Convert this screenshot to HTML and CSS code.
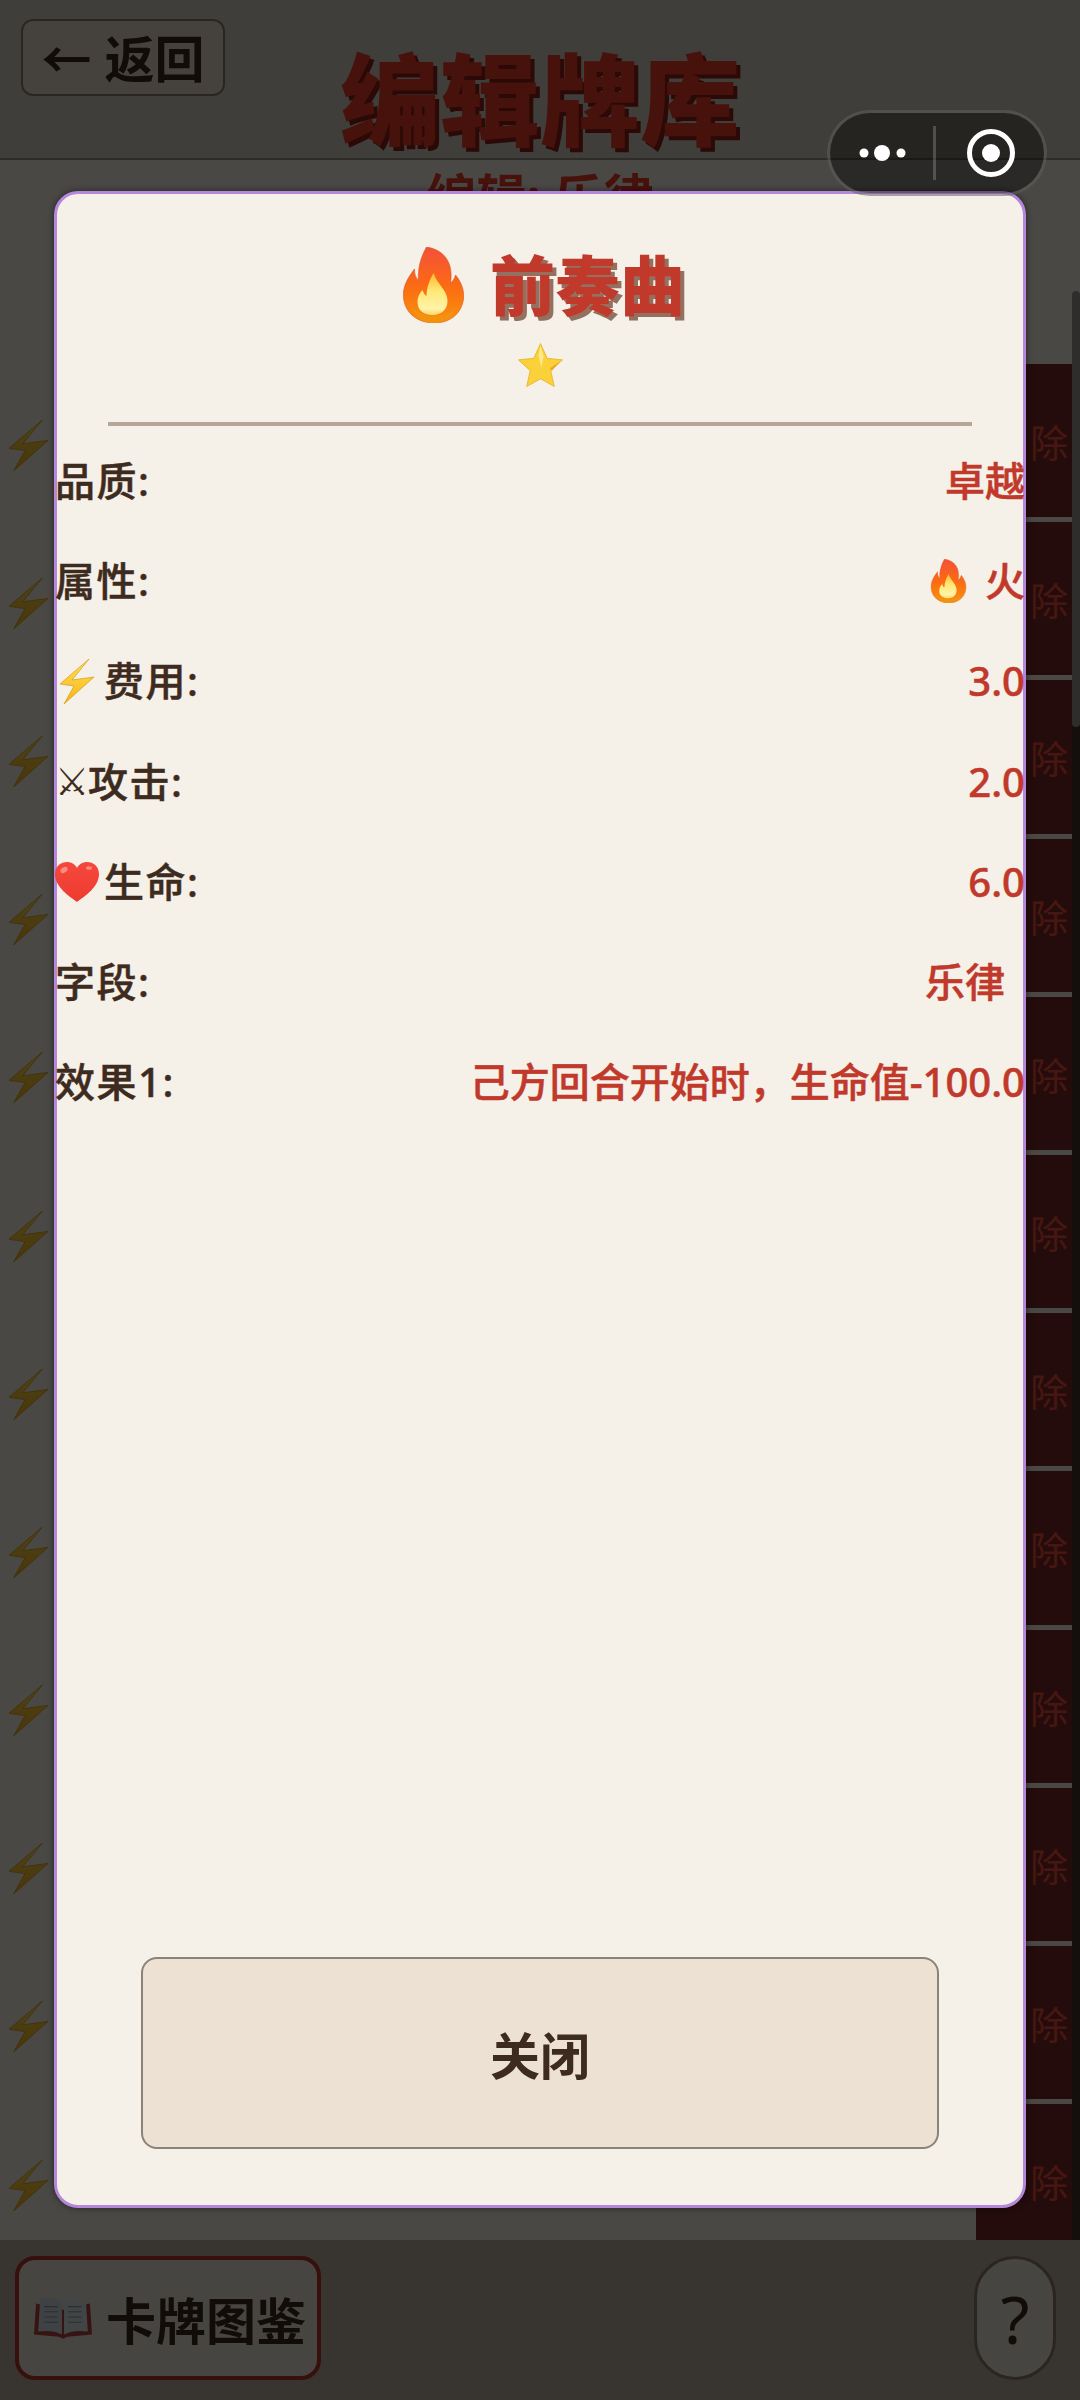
FILE: index.html
```html
<!DOCTYPE html>
<html lang="zh-CN">
<head>
  <meta charset="UTF-8">
  <title>编辑牌库</title>
  <link rel="stylesheet" href="styles.css">
</head>
<body>

<svg class="icon-defs" width="0" height="0">
  <defs>
    <linearGradient id="flameOuter" x1="0" y1="0" x2="0" y2="1">
      <stop offset="0" stop-color="#f4503a"/>
      <stop offset="0.5" stop-color="#fb6a14"/>
      <stop offset="1" stop-color="#f9920c"/>
    </linearGradient>
    <linearGradient id="flameInner" x1="0" y1="0" x2="0" y2="1">
      <stop offset="0" stop-color="#fdb92e"/>
      <stop offset="0.45" stop-color="#ffe97a"/>
      <stop offset="0.85" stop-color="#fff3a8"/>
      <stop offset="1" stop-color="#ffd76a"/>
    </linearGradient>
    <linearGradient id="boltFill" x1="0" y1="0" x2="0" y2="1">
      <stop offset="0" stop-color="#ffe35a"/>
      <stop offset="1" stop-color="#f8b414"/>
    </linearGradient>
    <linearGradient id="heartFill" x1="0" y1="0" x2="0" y2="1">
      <stop offset="0" stop-color="#f5483c"/>
      <stop offset="1" stop-color="#ee3b30"/>
    </linearGradient>
    <symbol id="i-flame" viewBox="0 0 60 76">
      <path d="M23 0C42 3 50 17 47 36C50 34 51 31 52 28C58 35 61 44 60 52C58 67 46 76 31 76C14 76 1 66 0 50C-1 39 5 30 11 22C11 27 12 31 15 33C14 20 18 9 23 0Z" fill="url(#flameOuter)" stroke="#d9541a" stroke-width="0.6"/>
      <path d="M30 26C34 38 44 43 44 54C44 63 37 68 29 68C20 68 14 63 14 55C14 50 16 46 19 43C20 46 21 48 23 49C23 41 26 33 30 26Z" fill="url(#flameInner)"/>
      <path d="M8 60C16 70 42 74 54 60C49 70 39 76 30 76C19 76 12 70 8 60Z" fill="#f2930f"/>
    </symbol>
    <symbol id="i-star" viewBox="0 0 44 43">
      <path d="M22 0.5L28.5 15L43.5 16.5L32 27L35.5 42.5L22 35L8.500 42.5L12 27L0.500 16.500L15.500 15Z" fill="#fbd13a" stroke="#e8b023" stroke-width="0.8" stroke-linejoin="round"/>
      <path d="M22 2L25 13L23 24L20 13Z" fill="#ffe98a"/>
      <path d="M31 25L41 18L33 27Z" fill="#eaa91f"/>
    </symbol>
    <symbol id="i-bolt" viewBox="0 0 34 45" preserveAspectRatio="none">
      <path d="M29 0L12 21L34 18L4 45L14 27L0 25Z" fill="url(#boltFill)" stroke="#d89a16" stroke-width="0.7" stroke-linejoin="round"/>
    </symbol>
    <symbol id="i-heart" viewBox="0 0 44 40">
      <path d="M22 40C14 34 0 25 0 12C0 4 6 0 12 0C16 0 20 2 22 6C24 2 28 0 32 0C38 0 44 4 44 12C44 25 30 34 22 40Z" fill="url(#heartFill)"/>
      <ellipse cx="9" cy="8" rx="4" ry="2.500" fill="#fb8a80" transform="rotate(-30 9 8)"/>
      <ellipse cx="34" cy="6" rx="3" ry="1.800" fill="#fb8a80"/>
    </symbol>
    <symbol id="i-book" viewBox="0 0 56 40">
      <path d="M0 36L2 6L28 12L54 6L56 36L32 38L28 40L24 38Z" fill="#b8403a"/>
      <path d="M4 33L6 2C14 0 23 1 27 6L27 36C20 32 12 32 4 33Z" fill="#cfdce4"/>
      <path d="M52 33L50 2C42 0 33 1 29 6L29 36C36 32 44 32 52 33Z" fill="#dbe6ec"/>
      <path d="M10 9H23M10 14H23M10 19H23M10 24H23M33 9H46M33 14H46M33 19H46M33 24H46" stroke="#8f9aa0" stroke-width="1"/>
    </symbol>
  </defs>
</svg>

<div class="page">
  <header class="top-bar">
    <button class="back-btn">← 返回</button>
    <h1 class="page-title">编辑牌库</h1>
  </header>

  <main class="deck-area">
    <h2 class="deck-name">编辑: 乐律</h2>
    <div class="deck-list">
      <div class="deck-row"><svg class="row-bolt"><use href="#i-bolt"/></svg><button class="remove-btn">除</button></div>
      <div class="deck-row"><svg class="row-bolt"><use href="#i-bolt"/></svg><button class="remove-btn">除</button></div>
      <div class="deck-row"><svg class="row-bolt"><use href="#i-bolt"/></svg><button class="remove-btn">除</button></div>
      <div class="deck-row"><svg class="row-bolt"><use href="#i-bolt"/></svg><button class="remove-btn">除</button></div>
      <div class="deck-row"><svg class="row-bolt"><use href="#i-bolt"/></svg><button class="remove-btn">除</button></div>
      <div class="deck-row"><svg class="row-bolt"><use href="#i-bolt"/></svg><button class="remove-btn">除</button></div>
      <div class="deck-row"><svg class="row-bolt"><use href="#i-bolt"/></svg><button class="remove-btn">除</button></div>
      <div class="deck-row"><svg class="row-bolt"><use href="#i-bolt"/></svg><button class="remove-btn">除</button></div>
      <div class="deck-row"><svg class="row-bolt"><use href="#i-bolt"/></svg><button class="remove-btn">除</button></div>
      <div class="deck-row"><svg class="row-bolt"><use href="#i-bolt"/></svg><button class="remove-btn">除</button></div>
      <div class="deck-row"><svg class="row-bolt"><use href="#i-bolt"/></svg><button class="remove-btn">除</button></div>
      <div class="deck-row"><svg class="row-bolt"><use href="#i-bolt"/></svg><button class="remove-btn">除</button></div>
    </div>
    <div class="scroll-thumb"></div>
  </main>

  <footer class="bottom-bar">
    <button class="guide-btn"><svg class="guide-icon"><use href="#i-book"/></svg><span>卡牌图鉴</span></button>
    <button class="help-btn">?</button>
  </footer>
</div>

<div class="overlay"></div>

<div class="card-dialog">
  <div class="card-head">
    <div class="card-title">
      <svg class="title-flame"><use href="#i-flame"/></svg>
      <span class="title-text">前奏曲</span>
    </div>
    <svg class="title-star"><use href="#i-star"/></svg>
  </div>
  <div class="card-divider"></div>

  <div class="card-stats">
    <div class="stat-row"><span class="stat-label">品质:</span><span class="stat-value">卓越</span></div>
    <div class="stat-row"><span class="stat-label">属性:</span><span class="stat-value"><svg class="value-flame"><use href="#i-flame"/></svg>火</span></div>
    <div class="stat-row"><span class="stat-label"><svg class="label-bolt"><use href="#i-bolt"/></svg>费用:</span><span class="stat-value">3.0</span></div>
    <div class="stat-row"><span class="stat-label"><span class="label-sword">⚔</span>攻击:</span><span class="stat-value">2.0</span></div>
    <div class="stat-row"><span class="stat-label"><svg class="label-heart"><use href="#i-heart"/></svg>生命:</span><span class="stat-value">6.0</span></div>
    <div class="stat-row"><span class="stat-label">字段:</span><span class="stat-value inset">乐律</span></div>
    <div class="stat-row"><span class="stat-label">效果1:</span><span class="stat-value">己方回合开始时，生命值-100.0</span></div>
  </div>

  <button class="close-btn">关闭</button>
</div>

<div class="capsule">
  <svg class="capsule-more" viewBox="0 0 60 24">
    <circle cx="11" cy="12" r="4.500"/>
    <circle cx="29" cy="12" r="8"/>
    <circle cx="48" cy="12" r="4.500"/>
  </svg>
  <span class="capsule-line"></span>
  <svg class="capsule-close" viewBox="0 0 48 48">
    <circle cx="24" cy="24" r="21.500" fill="none" stroke="#fff" stroke-width="5"/>
    <circle cx="24" cy="24" r="9" fill="#fff"/>
  </svg>
</div>

</body>
</html>
```

FILE: styles.css
```css
* { box-sizing: border-box; }
html, body { margin: 0; padding: 0; }
body {
  width: 1080px;
  height: 2400px;
  overflow: hidden;
  position: relative;
  font-family: "Noto Sans", "Noto Sans CJK SC", sans-serif;
  background-color: #f5f0e8;
}
button { font-family: inherit; padding: 0; }
.icon-defs { position: absolute; }

.page {
  display: flex;
  flex-direction: column;
  height: 2400px;
}
.top-bar {
  height: 160px;
  flex: none;
  position: relative;
  display: flex;
  justify-content: center;
  background-color: #d6cfc4;
  border-bottom: 2px solid #9c958a;
}
.back-btn {
  position: absolute;
  left: 21px;
  top: 19px;
  width: 204px;
  height: 77px;
  padding-top: 2px;
  font-size: 50px;
  font-weight: 700;
  line-height: 1;
  white-space: nowrap;
  color: #3e2b20;
  background-color: #e6dbce;
  border: 2px solid #8d7d6e;
  border-radius: 12px;
}
.page-title {
  margin: 24px 0 0;
  font-size: 100px;
  line-height: 1.5;
  font-weight: 900;
  color: #ee3a28;
  text-shadow: 4px 4px 0 #8d2116;
}

.deck-area {
  flex: 1;
  position: relative;
  overflow: hidden;
}
.deck-name {
  margin: 0;
  height: 204px;
  padding-top: 3px;
  font-size: 50px;
  line-height: 68px;
  font-weight: 700;
  text-align: center;
  color: #ee3a28;
}
.deck-list {
  display: flex;
  flex-direction: column;
  gap: 5px;
  padding-right: 8px;
  background: linear-gradient(to left, #45302a 8px, transparent 8px);
}
.deck-row {
  flex: none;
  height: 153.2px;
  display: flex;
  align-items: center;
  justify-content: space-between;
}
.row-bolt {
  width: 39px;
  height: 51px;
  margin: 9px 0 0 9px;
}
.remove-btn {
  width: 96px;
  height: 100%;
  border: none;
  font-size: 38px;
  text-align: right;
  padding-right: 4px;
  font-weight: 400;
  color: #f04a38;
  background-color: #762b27;
}
.scroll-thumb {
  position: absolute;
  right: 0;
  top: 131px;
  width: 8px;
  height: 436px;
  border-radius: 4px;
  background-color: #9b9892;
}

.bottom-bar {
  height: 160px;
  flex: none;
  display: flex;
  align-items: center;
  justify-content: space-between;
  padding: 0 24px 4px 15px;
  background-color: #bdaea1;
}
.guide-btn {
  width: 306px;
  height: 124px;
  flex: none;
  display: flex;
  align-items: center;
  gap: 14px;
  padding-left: 15px;
  font-size: 50px;
  font-weight: 700;
  white-space: nowrap;
  color: #3e2b20;
  background-color: #efe6da;
  border: 4px solid #b83528;
  border-radius: 20px;
}
.guide-icon { width: 58px; height: 42px; flex: none; }
.help-btn {
  width: 82px;
  height: 124px;
  flex: none;
  font-size: 66px;
  font-weight: 400;
  color: #3e2b20;
  background-color: #efe6da;
  border: 3px solid #8d7d6e;
  border-radius: 41px;
}

.overlay {
  position: absolute;
  inset: 0;
  background-color: rgba(0, 0, 0, 0.7);
}

.card-dialog {
  position: absolute;
  left: 54px;
  top: 191px;
  width: 972px;
  height: 2017px;
  display: flex;
  flex-direction: column;
  align-items: center;
  background-color: #f5f0e8;
  border: 3px solid #b487dc;
  border-radius: 24px;
  box-shadow: 0 0 6px rgba(0, 0, 0, 0.5);
}
.card-head {
  width: 100%;
  height: 228px;
  padding-top: 53px;
  display: flex;
  flex-direction: column;
  align-items: center;
  flex: none;
}
.card-title {
  display: flex;
  align-items: center;
  height: 76px;
  gap: 26px;
  padding-left: 8px;
}
.title-flame { width: 61px; height: 76px; }
.title-text {
  font-size: 65px;
  line-height: 76px;
  font-weight: 900;
  color: #c0392b;
  text-shadow: 4px 4px 0 #93705f;
}
.title-star {
  width: 45px;
  height: 44px;
  margin-top: 20px;
}
.card-divider {
  width: 864px;
  height: 4px;
  flex: none;
  background-color: #b5a696;
}
.card-stats {
  width: calc(100% + 4px);
  margin: 0 -2px;
  flex: 1;
  padding-top: 5px;
}
.stat-row {
  height: 100.2px;
  display: flex;
  align-items: center;
  justify-content: space-between;
  font-size: 40px;
  font-weight: 500;
  line-height: 1;
  -webkit-text-stroke: 0.5px currentColor;
}
.stat-label {
  display: flex;
  align-items: center;
  letter-spacing: 1.5px;
  color: #3e2b20;
}
.stat-value {
  display: flex;
  align-items: center;
  color: #c0392b;
}
.stat-value.inset { padding-right: 20px; }
.value-flame { width: 37px; height: 44px; margin-right: 18px; }
.label-bolt { width: 34px; height: 45px; margin: 0 10px 0 5px; flex: none; }
.label-sword {
  font-family: "DejaVu Sans", sans-serif;
  font-weight: 400;
  font-size: 38px;
  width: 33px;
  -webkit-text-stroke: 0;
}
.label-heart { width: 44px; height: 42px; margin-right: 5px; flex: none; }

.close-btn {
  width: 798px;
  height: 192px;
  flex: none;
  margin-bottom: 56px;
  font-size: 50px;
  font-weight: 700;
  color: #3e2b20;
  background-color: #ede1d4;
  border: 2px solid #8a8378;
  border-radius: 16px;
}

.capsule {
  position: absolute;
  left: 827px;
  top: 110px;
  width: 220px;
  height: 86px;
  display: flex;
  align-items: center;
  background-color: rgba(0, 0, 0, 0.42);
  border: 3px solid rgba(255, 255, 255, 0.2);
  border-radius: 43px;
}
.capsule-more { width: 60px; height: 24px; margin-left: 23px; fill: #fff; }
.capsule-line {
  width: 3px;
  height: 54px;
  margin-left: 20px;
  background-color: rgba(255, 255, 255, 0.2);
}
.capsule-close { width: 48px; height: 48px; margin-left: 31px; }
```
